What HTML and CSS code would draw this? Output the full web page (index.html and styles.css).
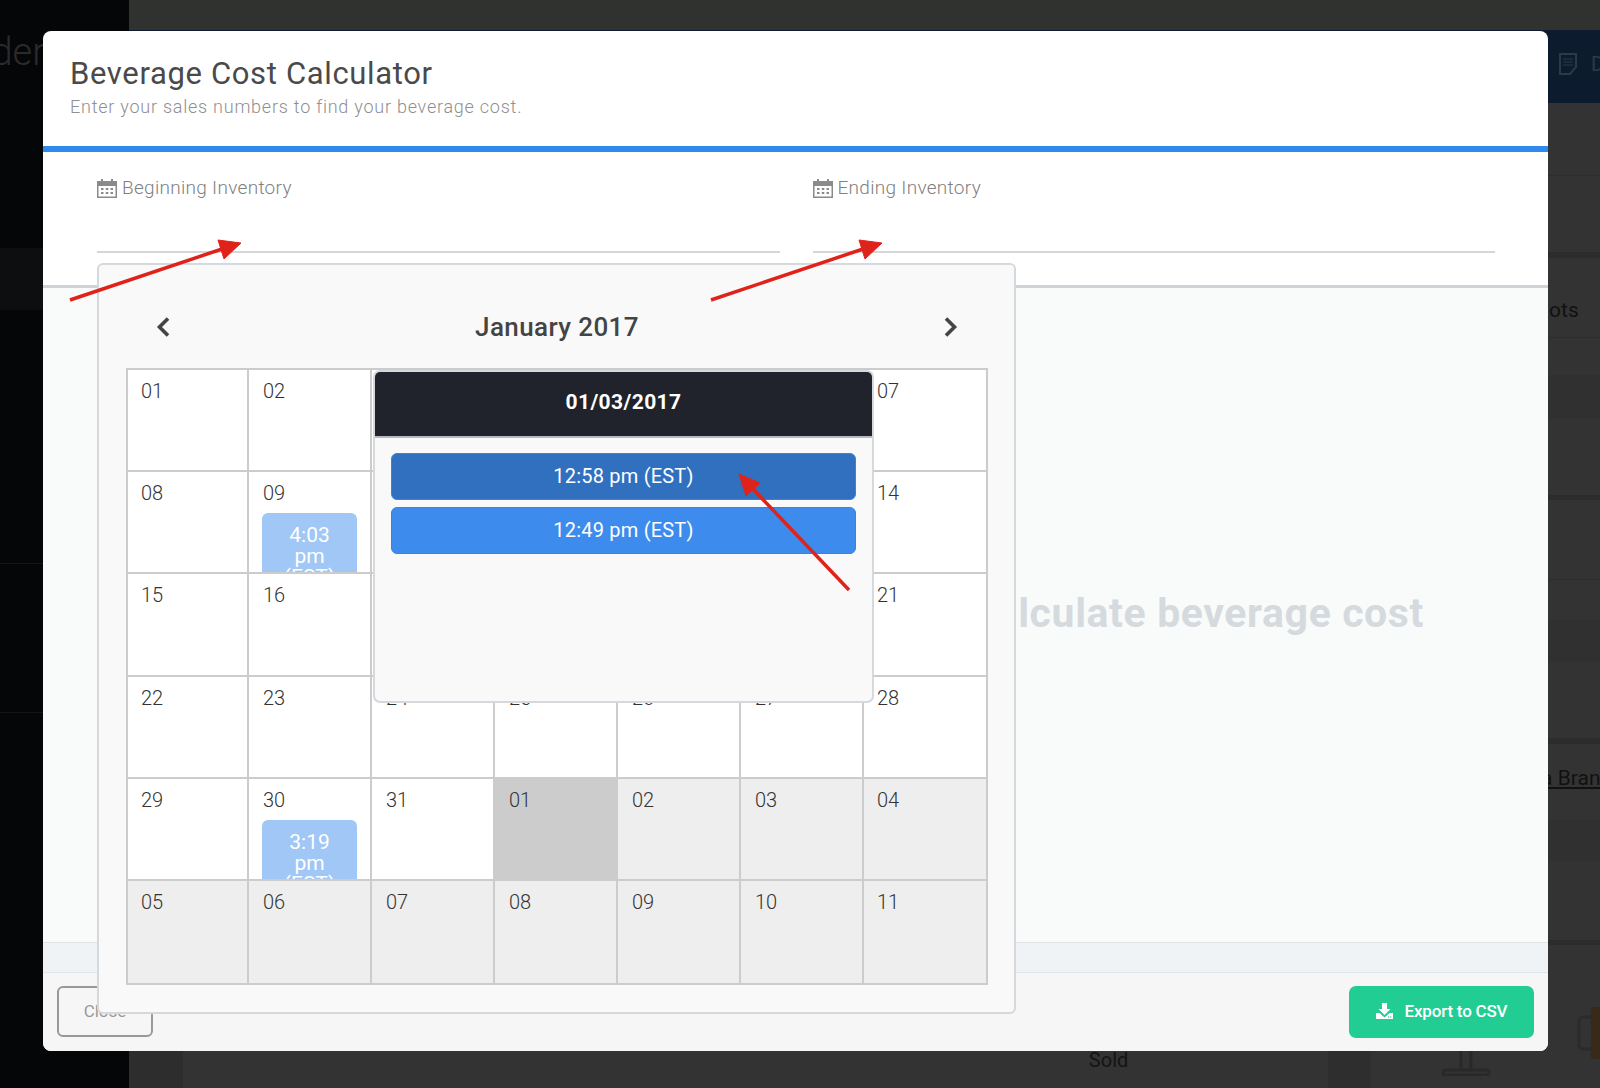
FILE: index.html
```html
<!DOCTYPE html>
<html lang="en">
<head>
    <meta charset="UTF-8">
    <title>Beverage Cost Calculator</title>
    <link rel="stylesheet" href="styles.css">
</head>

<body>
    <!-- dimmed app behind the modal -->
    <div class="app">
        <aside class="sidebar">
            <div class="logo"><span>Partender</span></div>
            <div class="side-block"></div>
            <div class="side-row"></div>
            <div class="side-row side-row-tall"></div>
        </aside>
        <main class="main">
            <div class="bg-row h30 topbar"></div>
            <div class="bg-row h73 navy">
                <svg class="doc-icon" width="18" height="22" viewBox="0 0 18 22" fill="none" stroke="#2c3a48" stroke-width="2"><path d="M1 1h16v13l-6 7H1z"/><path d="M4 6h10M4 9h10M4 12h10" stroke-width="1.2"/></svg>
                <span class="navy-text">Data</span>
            </div>
            <div class="bg-row h73 line"></div>
            <div class="bg-row h76"></div>
            <div class="bg-row h6 dark"></div>
            <div class="bg-row h80 line"><span class="bg-text shots">Shots</span></div>
            <div class="bg-row h37"></div>
            <div class="bg-row h43 band"></div>
            <div class="bg-row h77"></div>
            <div class="bg-row h5 dark"></div>
            <div class="bg-row h80 line"></div>
            <div class="bg-row h40"></div>
            <div class="bg-row h42 band"></div>
            <div class="bg-row h76"></div>
            <div class="bg-row h6 dark"></div>
            <div class="bg-row h76"><span class="bg-text brand">Beta Brand</span></div>
            <div class="bg-row h41 band"></div>
            <div class="bg-row h79"></div>
            <div class="bg-row h5 dark"></div>
            <div class="bottom-row">
                <div class="bottom-shade"></div>
                <span class="sold">Sold</span>
                <div class="bottom-col"></div>
                <svg class="stand" width="50" height="25" viewBox="0 0 50 25" fill="none" stroke="#292929" stroke-width="3"><path d="M20 0v19M30 0v19"/><rect x="2" y="19" width="46" height="5" rx="2.5"/></svg>
                <svg class="mug" width="23" height="56" viewBox="0 0 23 56" fill="none"><path d="M14 12H6a4 4 0 0 0-4 4v24a4 4 0 0 0 4 4h8" stroke="#2b2b2b" stroke-width="3"/><rect x="14" y="2" width="9" height="52" fill="#38291a"/></svg>
            </div>
        </main>
    </div>

    <div class="modal">
        <header class="modal-head">
            <h1>Beverage Cost Calculator</h1>
            <p>Enter your sales numbers to find your beverage cost.</p>
        </header>

        <section class="fields">
            <div class="field">
                <label>
                    <svg width="20" height="20" viewBox="0 0 20 20"><use href="#cal"/></svg>
                    Beginning Inventory
                </label>
            </div>
            <div class="field">
                <label>
                    <svg width="20" height="20" viewBox="0 0 20 20"><use href="#cal"/></svg>
                    Ending Inventory
                </label>
            </div>
        </section>

        <section class="modal-body">
            <div class="empty-msg">Select beginning and ending inventory to calculate beverage cost</div>
        </section>
        <div class="modal-strip"></div>

        <footer class="modal-foot">
            <button class="btn-close">Close</button>
            <button class="btn-export">
                <svg width="17" height="16" viewBox="0 0 17 16"><path d="M6 0h5v6h3.500L8.500 12 2.500 6H6z" fill="#fff"/><path d="M0 10h3.500l5 4.500 5-4.500H17v6H0z" fill="#fff"/><circle cx="12.500" cy="14" r=".7" fill="#21cd92"/><circle cx="14.700" cy="14" r=".7" fill="#21cd92"/></svg>
                Export to CSV
            </button>
        </footer>

        <!-- date picker, open over the modal -->
        <div class="picker">
            <div class="picker-nav">
                <svg width="14" height="20" viewBox="0 0 14 20" fill="none" stroke="#444" stroke-width="3.600"><path d="M12 1.500 3.500 10l8.500 8.500"/></svg>
                <span class="month">January 2017</span>
                <svg width="14" height="20" viewBox="0 0 14 20" fill="none" stroke="#444" stroke-width="3.600"><path d="M2 1.500 10.500 10 2 18.500"/></svg>
            </div>
            <div class="cal-grid">
                <div class="cell">01</div>
                <div class="cell">02</div>
                <div class="cell">03</div>
                <div class="cell">04</div>
                <div class="cell">05</div>
                <div class="cell">06</div>
                <div class="cell">07</div>

                <div class="cell">08</div>
                <div class="cell">09<div class="event">4:03 pm (EST)</div></div>
                <div class="cell">10</div>
                <div class="cell">11</div>
                <div class="cell">12</div>
                <div class="cell">13</div>
                <div class="cell">14</div>

                <div class="cell">15</div>
                <div class="cell">16</div>
                <div class="cell">17</div>
                <div class="cell">18</div>
                <div class="cell">19</div>
                <div class="cell">20</div>
                <div class="cell">21</div>

                <div class="cell">22</div>
                <div class="cell">23</div>
                <div class="cell">24</div>
                <div class="cell">25</div>
                <div class="cell">26</div>
                <div class="cell">27</div>
                <div class="cell">28</div>

                <div class="cell">29</div>
                <div class="cell">30<div class="event">3:19 pm (EST)</div></div>
                <div class="cell">31</div>
                <div class="cell today">01</div>
                <div class="cell other">02</div>
                <div class="cell other">03</div>
                <div class="cell other">04</div>

                <div class="cell other">05</div>
                <div class="cell other">06</div>
                <div class="cell other">07</div>
                <div class="cell other">08</div>
                <div class="cell other">09</div>
                <div class="cell other">10</div>
                <div class="cell other">11</div>

                <div class="day-pop">
                    <div class="day-head">01/03/2017</div>
                    <div class="day-times">
                        <button class="time-btn active">12:58 pm (EST)</button>
                        <button class="time-btn">12:49 pm (EST)</button>
                    </div>
                </div>
            </div>
        </div>
    </div>

    <!-- red annotation arrows on top of the screenshot -->
    <svg class="arrows" width="1600" height="1088" viewBox="0 0 1600 1088">
        <g fill="#e0231a" stroke="#e0231a">
            <path d="M70 300 228 247" stroke-width="3.500"/>
            <path d="M241 243 218 240 224 259z"/>
            <path d="M711 300 869 247" stroke-width="3.500"/>
            <path d="M882 243 859 240 865 259z"/>
            <path d="M849 590 752 488" stroke-width="3.500"/>
            <path d="M739 474 760 483 746 496z"/>
        </g>
    </svg>

    <svg width="0" height="0" class="defs">
        <defs>
            <g id="cal" fill="#8a8a8a">
                <path d="M0 3h4V1h2v2h8V1h2v2h4v17H0zm1.500 5v10.500h17V8z"/>
                <path d="M4 10h2.500v2H4zM8.800 10h2.500v2H8.800zM13.500 10H16v2h-2.500zM4 14h2.500v2H4zM8.800 14h2.500v2H8.800zM13.500 14H16v2h-2.500z"/>
            </g>
        </defs>
    </svg>
</body>
</html>
```

FILE: styles.css
```css
body {
    margin: 0;
    height: 1088px;
    overflow: hidden;
    background: #333333;
    font-family: 'Roboto', sans-serif;
    position: relative;
}

.defs {
    position: absolute;
}

/* app behind the modal */
.app {
    display: flex;
    height: 1088px;
}

.sidebar {
    width: 129px;
    flex: none;
    background: #050608;
}

.logo {
    width: 45px;
    height: 114px;
    display: flex;
    justify-content: flex-end;
    overflow: hidden;
    box-sizing: border-box;
    padding-top: 3px;
    font-size: 38px;
    font-weight: 300;
    color: #2b2b2b;
    white-space: nowrap;
    line-height: 98px;
}

.side-block {
    height: 62px;
    margin-top: 134px;
    background: #0d0e0f;
}

.side-row {
    height: 253px;
    border-bottom: 1px solid #141516;
}

.side-row-tall {
    height: 148px;
}

.main {
    flex: 1;
    min-width: 0;
}

.bg-row {
    box-sizing: border-box;
    display: flex;
    align-items: center;
    white-space: nowrap;
    overflow: hidden;
}

.h5 { height: 5px; }
.h6 { height: 6px; }
.h30 { height: 30px; }
.h37 { height: 37px; }
.h40 { height: 40px; }
.h41 { height: 41px; }
.h42 { height: 42px; }
.h43 { height: 43px; }
.h73 { height: 73px; }
.h76 { height: 76px; }
.h77 { height: 77px; }
.h79 { height: 79px; }
.h80 { height: 80px; }

.topbar { background: #303230; }
.navy { background: #0c1c2e; padding-left: 1430px; padding-bottom: 6px; }
.dark { background: #2c2c2c; }
.band { background: #2f302f; }
.line { border-bottom: 1px solid #2d2d2d; }

.doc-icon {
    flex: none;
}

.navy-text {
    margin-left: 14px;
    font-size: 20px;
    color: #2c3a48;
}

.bg-text {
    font-size: 21px;
    color: #111111;
}

.shots {
    margin-left: 1396px;
    margin-top: 24px;
}

.brand {
    margin-left: 1381px;
    margin-top: -8px;
    text-decoration: underline;
}

.bottom-row {
    height: 143px;
    display: flex;
    align-items: flex-end;
}

.bottom-shade {
    width: 54px;
    height: 143px;
    background: #2d2d2d;
}

.sold {
    margin-left: 906px;
    margin-bottom: 16px;
    font-size: 20px;
    color: #141414;
}

.bottom-col {
    width: 43px;
    height: 143px;
    margin-left: 200px;
    background: #2e2e2e;
}

.stand {
    margin-left: 70px;
    margin-bottom: 12px;
}

.mug {
    margin-left: 86px;
    margin-bottom: 27px;
}

/* modal */
.modal {
    position: absolute;
    left: 43px;
    top: 31px;
    width: 1505px;
    height: 1020px;
    border-radius: 8px;
    background: #ffffff;
    display: flex;
    flex-direction: column;
    overflow: hidden;
}

.modal-head {
    height: 121px;
    box-sizing: border-box;
    padding: 23px 27px 0;
    border-bottom: 6px solid #2f8aee;
}

.modal-head h1 {
    margin: 0;
    font-size: 31px;
    font-weight: 400;
    line-height: 40px;
    color: #4a4a4a;
    letter-spacing: 0.65px;
}

.modal-head p {
    margin: 2px 0 0;
    font-size: 18px;
    font-weight: 300;
    line-height: 22px;
    color: #8f8f8f;
    letter-spacing: 0.76px;
}

.fields {
    height: 136px;
    box-sizing: border-box;
    padding: 0 53px 0 54px;
    display: flex;
    gap: 33px;
    border-bottom: 3px solid #ced3d8;
}

.field {
    flex: 1;
    height: 99px;
    border-bottom: 2px solid #d6d6d6;
}

.field label {
    display: flex;
    align-items: center;
    gap: 5px;
    margin-top: 24px;
    font-size: 19px;
    font-weight: 300;
    line-height: 24px;
    color: #808080;
    letter-spacing: 0.3px;
}

.modal-body {
    flex: 1;
    min-height: 0;
    background: #f9fbfa;
    border-bottom: 1px solid #dfe3e6;
    display: flex;
    justify-content: flex-end;
    padding: 297px 124px 0 0;
    box-sizing: border-box;
}

.empty-msg {
    font-size: 41px;
    font-weight: 700;
    line-height: 56px;
    color: #d5dade;
    white-space: nowrap;
    letter-spacing: 0.6px;
}

.modal-strip {
    height: 29px;
    flex: none;
    background: #eff3f6;
    border-bottom: 1px solid #e3e6e8;
}

.modal-foot {
    height: 78px;
    flex: none;
    box-sizing: border-box;
    background: #f6f6f6;
    padding: 13px 14px 13px 14px;
    display: flex;
    justify-content: space-between;
}

.btn-close {
    width: 96px;
    height: 51px;
    border: 2px solid #999999;
    border-radius: 6px;
    background: transparent;
    font-family: inherit;
    font-size: 17px;
    color: #999999;
    padding: 0 0 2px;
}

.btn-export {
    width: 185px;
    height: 52px;
    border: none;
    border-radius: 7px;
    background: #21cd92;
    color: #ffffff;
    font-family: inherit;
    font-size: 17px;
    font-weight: 500;
    letter-spacing: -0.2px;
    display: flex;
    align-items: center;
    justify-content: center;
    gap: 12px;
    padding: 0 0 3px;
}

/* date picker */
.picker {
    position: absolute;
    left: 54px;
    top: 232px;
    width: 919px;
    height: 751px;
    box-sizing: border-box;
    background: #f9f9f9;
    border: 2px solid #d5d8dc;
    border-radius: 6px;
    padding: 0 26px 0 27px;
}

.picker-nav {
    height: 103px;
    display: flex;
    align-items: center;
    justify-content: space-between;
    padding: 21px 30px 0;
    color: #444444;
    box-sizing: border-box;
}

.month {
    font-size: 26px;
    font-weight: 500;
    letter-spacing: 0.4px;
}

.cal-grid {
    position: relative;
    display: grid;
    grid-template-columns: 121px repeat(5, 123px) 1fr;
    grid-auto-rows: 102.2px;
    border: 2px solid #cccccc;
    background: #ffffff;
    height: 613px;
}

.cell {
    box-sizing: border-box;
    border-right: 2px solid #cccccc;
    border-bottom: 2px solid #cccccc;
    padding: 10px 0 0 14px;
    font-size: 20px;
    font-weight: 300;
    line-height: 22px;
    color: #333333;
    overflow: hidden;
}

.cell:nth-child(7n+1),
.cell:nth-child(7n) {
    padding-left: 13px;
}

.cell:nth-child(7n) {
    border-right: none;
}

.cell:nth-last-child(-n+8) {
    border-bottom: none;
}

.today {
    background: #cccccc;
}

.other {
    background: #eeeeee;
}

.event {
    width: 95px;
    margin: 9px 0 0 -1px;
    padding: 12px 10px 0;
    box-sizing: border-box;
    background: #a0c7f5;
    border-radius: 6px;
    color: #ffffff;
    text-align: center;
    font-size: 21px;
    line-height: 21px;
    font-weight: 400;
}

.day-pop {
    position: absolute;
    left: 245px;
    top: 0;
    width: 501px;
    height: 333px;
    box-sizing: border-box;
    background: #f9f9f9;
    border: 2px solid #d5d8dc;
    border-radius: 7px;
    overflow: hidden;
}

.day-head {
    height: 64px;
    background: #20232b;
    border-bottom: 2px solid #b8b9bb;
    color: #ffffff;
    font-size: 21px;
    font-weight: 700;
    letter-spacing: 0.4px;
    line-height: 60px;
    text-align: center;
}

.day-times {
    padding: 15px 16px;
    display: flex;
    flex-direction: column;
    gap: 7px;
}

.time-btn {
    height: 47px;
    border: 1px solid #2f86ea;
    border-radius: 6px;
    background: #3d8bec;
    color: #ffffff;
    font-family: inherit;
    font-size: 20px;
    letter-spacing: 0.2px;
    padding: 0 0 2px;
}

.time-btn.active {
    background: #3070bf;
}

.arrows {
    position: absolute;
    left: 0;
    top: 0;
    pointer-events: none;
}
```
